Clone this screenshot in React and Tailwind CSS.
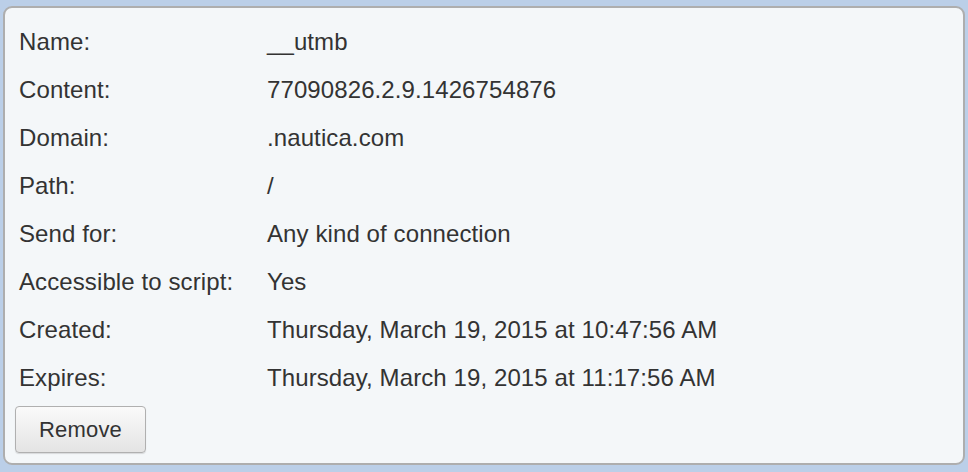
export default function App() {
  const rows = [
    ["Name:", "__utmb"],
    ["Content:", "77090826.2.9.1426754876"],
    ["Domain:", ".nautica.com"],
    ["Path:", "/"],
    ["Send for:", "Any kind of connection"],
    ["Accessible to script:", "Yes"],
    ["Created:", "Thursday, March 19, 2015 at 10:47:56 AM"],
    ["Expires:", "Thursday, March 19, 2015 at 11:17:56 AM"],
  ];
  return (
    <div
      className="w-[968px] h-[472px] bg-[#bbcfe8] pt-[6px] pl-[3px] pr-[3px] pb-[7px] text-[#333333]"
      style={{ fontFamily: '"Liberation Sans", Arial, sans-serif' }}
    >
      <div className="h-full border-2 border-[#aeaeae] rounded-[9px] bg-[#f4f7f9] pt-[10px] pl-[14px]">
        <div className="flex flex-col">
          {rows.map(([k, v]) => (
            <div key={k} className="flex h-[48px] items-center text-[24px] leading-[48px] tracking-[0.1px]">
              <div className="w-[248px] shrink-0">{k}</div>
              <div>{v}</div>
            </div>
          ))}
        </div>
        <button className="mt-[4px] -ml-[4px] w-[131px] h-[47px] rounded-[4px] border border-[#b0b0b0] bg-gradient-to-b from-[#fafafa] to-[#e4e4e4] text-[22px] tracking-[0.2px] text-[#333333] shadow-[0_1px_1px_rgba(0,0,0,0.12)]">
          Remove
        </button>
      </div>
    </div>
  );
}
